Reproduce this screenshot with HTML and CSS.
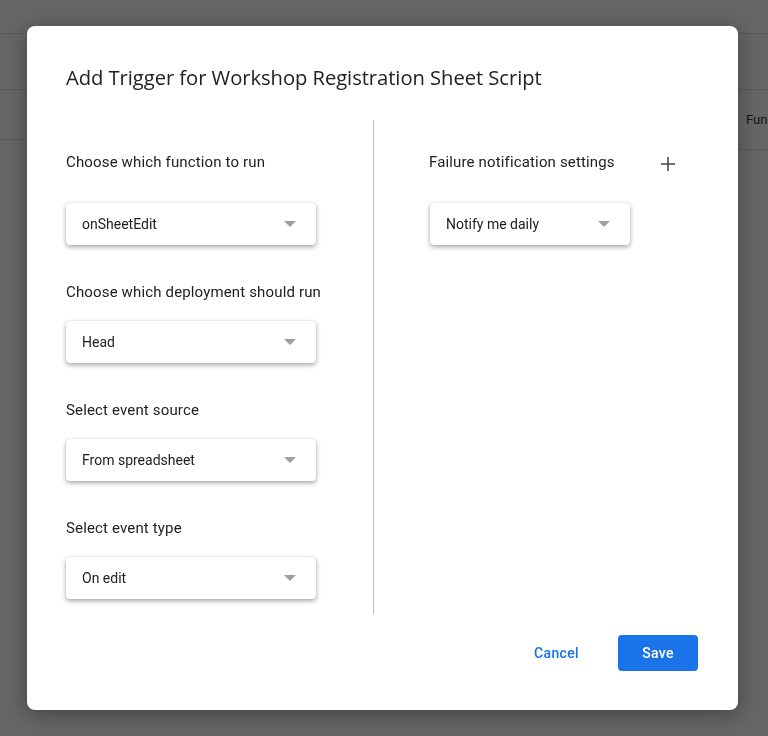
FILE: index.html
```html
<!DOCTYPE html>
<html lang="en">
<head>
<meta charset="utf-8">
<title>Add Trigger</title>
<link rel="stylesheet" href="styles.css">
</head>
<body>
<div class="page">
  <div class="page-header"></div>
  <div class="page-toolbar"></div>
  <div class="page-table">
    <div class="page-table-left"></div>
    <div class="page-table-right"><span class="col-head">Fun</span></div>
  </div>
</div>

<div class="dialog" role="dialog" aria-labelledby="dlg-title">
  <h1 class="dialog-title" id="dlg-title">Add Trigger for Workshop Registration Sheet Script</h1>
  <div class="dialog-body">
    <div class="col col-left">
      <div class="field field-first">
        <div class="field-label">Choose which function to run</div>
        <div class="select select-wide"><span class="select-value">onSheetEdit</span><span class="select-arrow"></span></div>
      </div>
      <div class="field">
        <div class="field-label">Choose which deployment should run</div>
        <div class="select select-wide"><span class="select-value">Head</span><span class="select-arrow"></span></div>
      </div>
      <div class="field">
        <div class="field-label">Select event source</div>
        <div class="select select-wide"><span class="select-value">From spreadsheet</span><span class="select-arrow"></span></div>
      </div>
      <div class="field">
        <div class="field-label">Select event type</div>
        <div class="select select-wide"><span class="select-value">On edit</span><span class="select-arrow"></span></div>
      </div>
    </div>
    <div class="col col-right">
      <div class="field field-first">
        <div class="field-label field-label-row">
          <span>Failure notification settings</span>
          <span class="icon-btn" aria-label="Add">
            <svg width="14" height="14" viewBox="0 0 14 14"><path d="M7 0v14M0 7h14" stroke="#444746" stroke-width="1.6" fill="none"/></svg>
          </span>
        </div>
        <div class="select select-narrow"><span class="select-value">Notify me daily</span><span class="select-arrow"></span></div>
      </div>
    </div>
  </div>
  <div class="dialog-footer">
    <button class="btn btn-text">Cancel</button>
    <button class="btn btn-primary">Save</button>
  </div>
</div>
</body>
</html>
```

FILE: styles.css
```css
* { box-sizing: border-box; }
html, body { margin: 0; padding: 0; }
body {
  width: 768px;
  height: 736px;
  overflow: hidden;
  background: #666666;
  font-family: Roboto, "Liberation Sans", Arial, sans-serif;
  color: #202124;
}

/* dimmed page behind the dialog */
.page { width: 768px; }
.page-header { height: 34px; border-bottom: 1px solid #5b5b5b; }
.page-toolbar { height: 56px; border-bottom: 1px solid #5b5b5b; }
.page-table { display: flex; }
.page-table-left { width: 738px; height: 50px; border-bottom: 1px solid #5b5b5b; }
.page-table-right {
  flex: 1;
  height: 60px;
  border-bottom: 1px solid #5b5b5b;
  display: flex;
  align-items: center;
  padding-left: 8px;
}
.col-head { font-size: 13px; color: #141414; white-space: nowrap; }

/* dialog */
.dialog {
  position: fixed;
  left: 27px;
  top: 26px;
  width: 711px;
  height: 684px;
  background: #ffffff;
  border-radius: 8px;
  box-shadow: 0 4px 22px rgba(0, 0, 0, 0.35);
  display: flex;
  flex-direction: column;
}
.dialog-title {
  margin: 0;
  padding: 39px 39px 0;
  height: 94px;
  font-family: "Open Sans", Roboto, sans-serif;
  font-weight: 500;
  font-size: 20.2px;
  line-height: 24px;
  letter-spacing: -0.05px;
  color: #202124;
  white-space: nowrap;
}
.dialog-body {
  display: flex;
  height: 494px;
  padding-left: 39px;
}
.col { padding-top: 30px; padding-bottom: 15px; }
.col-left {
  width: 308px;
  border-right: 1px solid #bdbdbd;
  padding-right: 56px;
}
.col-right {
  flex: 1;
  padding-left: 55px;
  padding-right: 58px;
}
.field + .field { margin-top: 35px; }
.field-label {
  font-size: 15px;
  line-height: 24px;
  letter-spacing: 0.15px;
  color: #202124;
  margin-bottom: 17px;
  white-space: nowrap;
}
.field-first .field-label { margin-bottom: 29px; }
.field-label-row {
  display: flex;
  justify-content: space-between;
  align-items: center;
  height: 24px;
}
.icon-btn {
  width: 24px;
  height: 24px;
  display: flex;
  align-items: center;
  justify-content: center;
  padding-top: 3px;
}

.select {
  height: 42px;
  background: #ffffff;
  border-radius: 4px;
  box-shadow: 0 2px 5px rgba(0, 0, 0, 0.35), 0 0 1px rgba(0, 0, 0, 0.2);
  display: flex;
  align-items: center;
  justify-content: space-between;
  padding: 0 20px 0 16px;
}
.select-wide { width: 250px; }
.select-narrow { width: 200px; margin-left: 1px; }
.select-value { font-size: 14px; color: #202124; }
.select-arrow {
  width: 0;
  height: 0;
  border-left: 6px solid transparent;
  border-right: 6px solid transparent;
  border-top: 6px solid #9e9e9e;
}

.dialog-footer {
  display: flex;
  justify-content: flex-end;
  align-items: flex-start;
  padding: 21px 40px 0 0;
  gap: 23px;
}
.btn {
  height: 36px;
  border: none;
  border-radius: 4px;
  font-family: Roboto, "Liberation Sans", Arial, sans-serif;
  font-size: 14px;
  font-weight: 500;
  letter-spacing: 0.35px;
  cursor: pointer;
}
.btn-text {
  background: transparent;
  color: #1a73e8;
  padding: 0 16px;
}
.btn-primary {
  background: #1a73e8;
  color: #ffffff;
  width: 80px;
  padding: 0;
}
```
